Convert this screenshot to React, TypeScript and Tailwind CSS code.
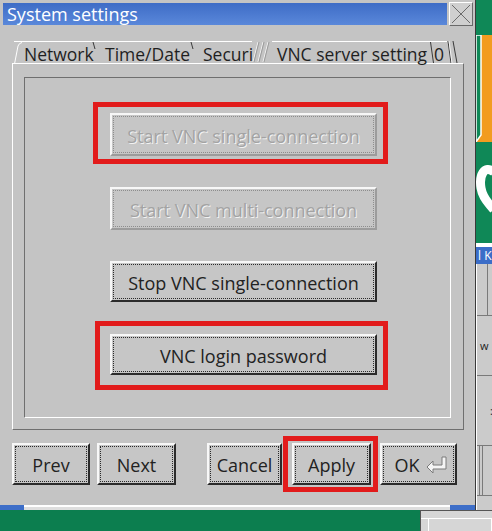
import React from "react";

const sans = "font-['Open_Sans','DejaVu_Sans',sans-serif]";

function Btn({ label, size, disabled = false }: { label: React.ReactNode; size: string; disabled?: boolean }) {
  return (
    <div
      className={`${size} shrink-0 border-2 border-t-[#f7f7f7] border-l-[#f7f7f7] ${
        disabled ? "border-b-[#9c9c9c] border-r-[#9c9c9c]" : "border-b-[#2b2b2b] border-r-[#2b2b2b]"
      } bg-[#c6c6c6] p-[1px]`}
    >
      <div
        className={`flex h-full items-center justify-center border border-dotted pt-[2px] ${
          disabled ? "border-[#8d8d8d] text-[#a3a3a3] [text-shadow:1px_1px_0_#f2f2f2]" : "border-[#2a2a2a] text-[#222]"
        }`}
      >
        {label}
      </div>
    </div>
  );
}

function EnterIcon() {
  return (
    <svg width="22" height="18" viewBox="0 0 22 18">
      <polygon
        points="1,11 7,5 7,9 16,9 16,1 20,1 20,13 7,13 7,17"
        fill="#f4f4f4"
        stroke="#7a7a7a"
        strokeWidth="1"
      />
    </svg>
  );
}

function Tab({ label, size, pad, first = false, tick = true }: { label: string; size: string; pad: string; first?: boolean; tick?: boolean }) {
  return (
    <div className={`relative flex h-[22px] shrink-0 items-center border-t border-white pt-[5px] ${size} ${pad}`}>
      {first && (
        <svg className="absolute left-0 top-0" width="8" height="22" viewBox="0 0 8 22">
          <path d="M0.5 22 L4 4 Q5 1 8 0.5" fill="none" stroke="#ffffff" strokeWidth="1" />
        </svg>
      )}
      <span className="whitespace-nowrap">{label}</span>
      {tick && (
        <svg className="absolute right-0 top-0" width="4" height="8" viewBox="0 0 4 8">
          <path d="M1 0 L3 7" stroke="#3a3a3a" strokeWidth="1" />
        </svg>
      )}
    </div>
  );
}

export default function App() {
  return (
    <div className={`flex h-[531px] w-[492px] flex-col overflow-hidden bg-[#0c7e4f] ${sans}`}>
      <div className="flex h-[510px]">
        {/* dialog window */}
        <div className="flex w-[476px] shrink-0 flex-col border-r border-[#3a3a3a] bg-[#c4c4c4]">
          {/* title bar */}
          <div className="flex h-[27px] items-center gap-[2px] pl-[3px] pr-[2px]">
            <div className="flex h-[22px] flex-1 items-center bg-gradient-to-b from-[#3e6cc6] to-[#5a88da] pl-[4px] text-[18px] leading-none text-white">
              System settings
            </div>
            <div className="flex h-[24px] w-[24px] items-center justify-center border border-t-white border-l-white border-b-[#6a6a6a] border-r-[#6a6a6a] bg-[#cfcfcf]">
              <svg width="20" height="20" viewBox="0 0 20 20">
                <path d="M1 1 L19 19 M19 1 L1 19" stroke="#6b6b6b" strokeWidth="1" />
              </svg>
            </div>
          </div>

          {/* tabs */}
          <div className="mt-[14px] flex pl-[14px] text-[17.5px] leading-none text-[#1f1f1f]">
            <Tab label="Network" size="w-[82px]" pad="pl-[10px]" first />
            <Tab label="Time/Date" size="w-[98px]" pad="pl-[9px]" />
            <Tab label="Securi" size="w-[58px]" pad="pl-[9px]" tick={false} />
            <div className="h-[22px] w-[20px] shrink-0">
              <svg width="20" height="22" viewBox="0 0 20 22">
                <path d="M6 1 L1 21 M11 1 L6 21 M16 1 L11 21" stroke="#f2f2f2" strokeWidth="1" />
                <path d="M7 1 L2 21 M12 1 L7 21 M17 1 L12 21" stroke="#9a9a9a" strokeWidth="1" />
              </svg>
            </div>
            <Tab label="VNC server setting" size="w-[158px]" pad="pl-[5px]" tick={false} />
            <div className="relative flex h-[22px] w-[17px] shrink-0 items-center border-t border-white pl-[4px] pt-[5px]">
              <svg className="absolute left-0 top-0" width="4" height="22" viewBox="0 0 4 22">
                <path d="M0.5 0 L3.5 21" stroke="#3a3a3a" strokeWidth="1" />
              </svg>
              <span>0</span>
            </div>
            <div className="h-[22px] w-[12px] shrink-0">
              <svg width="12" height="22" viewBox="0 0 12 22">
                <path d="M1 0 L4 22 M6 0 L10 22" stroke="#3a3a3a" strokeWidth="1" />
                <path d="M2 0 L5 22" stroke="#f2f2f2" strokeWidth="1" />
              </svg>
            </div>
          </div>

          {/* tab page */}
          <div className="ml-[12px] flex h-[367px] w-[452px] flex-col border border-t-white border-l-white border-b-[#6f6f6f] border-r-[#6f6f6f] pb-[11px] pl-[11px] pr-[12px] pt-[13px]">
            <div className="flex flex-1 flex-col border border-t-[#6f6f6f] border-l-[#6f6f6f] border-b-white border-r-white text-[18px] leading-none">
              <div className="ml-[68px] mt-[24px] w-[295px] border-[5px] border-[#e21b1b] pb-[3px] pl-[12px] pr-[6px] pt-[6px]">
                <Btn label="Start VNC single-connection" size="w-[267px] h-[43px]" disabled />
              </div>
              <div className="ml-[85px] mt-[23px]">
                <Btn label="Start VNC multi-connection" size="w-[267px] h-[43px]" disabled />
              </div>
              <div className="ml-[85px] mt-[31px]">
                <Btn label="Stop VNC single-connection" size="w-[267px] h-[41px]" />
              </div>
              <div className="ml-[70px] mt-[19px] w-[293px] border-[5px] border-[#e21b1b] pb-[10px] pl-[10px] pr-[6px] pt-[8px]">
                <Btn label="VNC login password" size="w-[267px] h-[41px]" />
              </div>
            </div>
          </div>

          {/* bottom buttons */}
          <div className="mt-[6px] flex h-[56px] items-center pl-[12px] text-[18px] leading-none">
            <Btn label="Prev" size="w-[78px] h-[42px]" />
            <div className="ml-[7px]">
              <Btn label="Next" size="w-[79px] h-[42px]" />
            </div>
            <div className="ml-[31px]">
              <Btn label="Cancel" size="w-[75px] h-[42px]" />
            </div>
            <div className="ml-[1px] border-[5px] border-[#e21b1b] py-[2px] pl-[4px] pr-[2px]">
              <Btn label="Apply" size="w-[79px] h-[42px]" />
            </div>
            <div className="ml-[2px]">
              <Btn
                label={
                  <span className="flex items-center gap-[6px] pl-[5px]">
                    <span>OK</span>
                    <EnterIcon />
                  </span>
                }
                size="w-[77px] h-[42px]"
              />
            </div>
          </div>

          <div className="flex-1" />
          <div className="flex h-[5px]">
            <div className="w-[24px] bg-[#3d6ec8]" />
            <div className="flex-1 border-t-2 border-white bg-[#dedede]" />
            <div className="w-[25px] bg-[#3d6ec8]" />
          </div>
        </div>

        {/* desktop strip on the right */}
        <div className="flex flex-1 flex-col">
          <div className="h-[35px] bg-[#0f8857]" />
          <div className="h-[107px] bg-[#f29c20]">
            <svg width="16" height="107" viewBox="0 0 16 107">
              <polygon points="0,0 5,0 5,100 0,107" fill="#0f8857" stroke="#ffffff" strokeWidth="1.5" />
            </svg>
          </div>
          <div className="h-[101px] bg-[#0f8857]">
            <svg width="16" height="101" viewBox="0 0 16 101">
              <path d="M18 30 C8 22 3 34 5 46 C7 58 14 62 18 68" fill="none" stroke="#ffffff" strokeWidth="9" />
            </svg>
          </div>
          <div className="flex h-[4px] bg-white" />
          <div className="flex h-[17px] items-center bg-[#3b6dc8] pl-[2px] text-[12px] leading-none text-white">
            l K
          </div>
          <div className="flex flex-1 flex-col border-l border-white bg-[#cbcbcb] text-[11px] leading-none text-[#222]">
            <div className="flex h-[52px] border-b border-[#7a7a7a]">
              <div className="w-[11px] border-r border-[#7a7a7a]" />
            </div>
            <div className="flex h-[60px] items-center border-b border-[#7a7a7a] pl-[3px]">w</div>
            <div className="flex h-[70px] items-center border-b border-[#7a7a7a] pl-[13px]">:</div>
            <div className="flex h-[50px] border-b border-[#7a7a7a]">
              <div className="w-[3px] border-r border-[#7a7a7a]" />
              <div className="w-[3px] border-r border-[#7a7a7a]" />
            </div>
            <div className="flex-1" />
          </div>
        </div>
      </div>

      <div className="flex h-[21px]">
        <div className="flex-1" />
        <div className="flex w-[72px] flex-col border-l border-t border-[#555] bg-[#d6d6d6]">
          <div className="h-[8px] border-b border-white" />
          <div className="flex flex-1">
            <div className="w-[8px] border-r border-white" />
            <div className="flex-1 border-r border-white" />
          </div>
        </div>
      </div>
    </div>
  );
}
